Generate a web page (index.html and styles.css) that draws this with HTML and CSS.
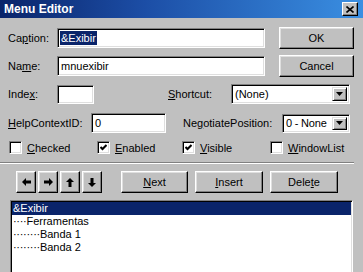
FILE: index.html
```html
<!DOCTYPE html>
<html lang="en">
    <head>
        <meta charset="utf-8" />
        <title>Menu Editor</title>
        <link rel="stylesheet" href="styles.css">
    </head>

    <body>
        <div class="dialog">
            <div class="titlebar">
                <span class="title">Menu Editor</span>
                <span class="close">
                    <svg width="8" height="7" viewBox="0 0 8 7"><path d="M0.5 0.5 L7.5 6.5 M7.5 0.5 L0.5 6.5" stroke="#000" stroke-width="1.6" fill="none"/></svg>
                </span>
            </div>

            <!-- Caption -->
            <div class="row row-tall">
                <span class="lbl lbl-first">Ca<u>p</u>tion:</span>
                <div class="field field-wide"><span class="sel">&amp;Exibir</span></div>
                <div class="btn btn-side">OK</div>
            </div>

            <!-- Name -->
            <div class="row row-tall gap-6">
                <span class="lbl lbl-first">Na<u>m</u>e:</span>
                <div class="field field-wide">mnuexibir</div>
                <div class="btn btn-side">Cancel</div>
            </div>

            <!-- Index / Shortcut -->
            <div class="row gap-7">
                <span class="lbl lbl-first">Inde<u>x</u>:</span>
                <div class="field field-index"></div>
                <span class="lbl lbl-shortcut"><u>S</u>hortcut:</span>
                <div class="field combo combo-shortcut">
                    <span class="combo-text">(None)</span>
                    <span class="drop">
                        <svg width="7" height="4" viewBox="0 0 7 4"><polygon points="0,0 7,0 3.5,4" fill="#000"/></svg>
                    </span>
                </div>
            </div>

            <!-- HelpContextID / NegotiatePosition -->
            <div class="row gap-9">
                <span class="lbl lbl-help"><u>H</u>elpContextID:</span>
                <div class="field field-help">0</div>
                <span class="lbl lbl-negotiate">Ne<u>g</u>otiatePosition:</span>
                <div class="field combo combo-negotiate">
                    <span class="combo-text">0 - None</span>
                    <span class="drop">
                        <svg width="7" height="4" viewBox="0 0 7 4"><polygon points="0,0 7,0 3.5,4" fill="#000"/></svg>
                    </span>
                </div>
            </div>

            <!-- Flags -->
            <div class="row checks">
                <div class="check check-1"><span class="box"></span><span><u>C</u>hecked</span></div>
                <div class="check check-2"><span class="box"><svg width="7" height="7" viewBox="0 0 7 7"><polyline points="0.5,3 2.5,5 6.5,1" stroke="#000" stroke-width="2" fill="none"/></svg></span><span><u>E</u>nabled</span></div>
                <div class="check check-3"><span class="box"><svg width="7" height="7" viewBox="0 0 7 7"><polyline points="0.5,3 2.5,5 6.5,1" stroke="#000" stroke-width="2" fill="none"/></svg></span><span><u>V</u>isible</span></div>
                <div class="check"><span class="box"></span><span><u>W</u>indowList</span></div>
            </div>

            <div class="separator"></div>

            <!-- Arrows and actions -->
            <div class="row row-tall actions">
                <div class="btn arrow">
                    <svg width="9" height="8" viewBox="0 0 9 8"><polygon points="0,4 4,0 4,2.5 9,2.5 9,5.5 4,5.5 4,8" fill="#000"/></svg>
                </div>
                <div class="btn arrow">
                    <svg width="9" height="8" viewBox="0 0 9 8"><polygon points="9,4 5,0 5,2.5 0,2.5 0,5.5 5,5.5 5,8" fill="#000"/></svg>
                </div>
                <div class="btn arrow">
                    <svg width="8" height="9" viewBox="0 0 8 9"><polygon points="4,0 8,4 5.5,4 5.5,9 2.5,9 2.5,4 0,4" fill="#000"/></svg>
                </div>
                <div class="btn arrow">
                    <svg width="8" height="9" viewBox="0 0 8 9"><polygon points="4,9 8,5 5.5,5 5.5,0 2.5,0 2.5,5 0,5" fill="#000"/></svg>
                </div>
                <div class="btn action action-next"><u>N</u>ext</div>
                <div class="btn action"><u>I</u>nsert</div>
                <div class="btn action">Dele<u>t</u>e</div>
            </div>

            <!-- Menu tree -->
            <div class="list">
                <div class="item selected">&amp;Exibir</div>
                <div class="item"><span class="dots">····</span>Ferramentas</div>
                <div class="item"><span class="dots">········</span>Banda 1</div>
                <div class="item"><span class="dots">········</span>Banda 2</div>
            </div>
        </div>
    </body>
</html>
```

FILE: styles.css
```css
body {
    margin: 0;
    overflow: hidden;
    background-color: #c0c0c0;
}
.dialog {
    width: 363px;
    height: 272px;
    overflow: hidden;
    background-color: #c0c0c0;
    font-family: "Liberation Sans", Arial, sans-serif;
    font-size: 11px;
    color: #000;
}
.titlebar {
    height: 18px;
    display: flex;
    align-items: center;
    justify-content: space-between;
    padding: 0 5px 0 4px;
    background: linear-gradient(to right, #0a246a 0%, #1c4ea6 40%, #3a8fe2 100%);
}
.title {
    color: #fff;
    font-weight: bold;
    font-size: 12px;
}
.close {
    width: 14px;
    height: 12px;
    display: flex;
    align-items: center;
    justify-content: center;
    background-color: #c0c0c0;
    border: 1px solid;
    border-color: #fff #000 #000 #fff;
    box-shadow: inset -1px -1px 0 #808080;
}
u {
    text-decoration: underline;
    text-underline-offset: 1px;
}

/* rows */
.row {
    display: flex;
    align-items: center;
    height: 20px;
}
.row-tall {
    height: 22px;
    margin-top: 9px;
}
.gap-6 {
    margin-top: 6px;
}
.gap-7 {
    margin-top: 7px;
}
.gap-9 {
    margin-top: 9px;
}
.lbl {
    flex: none;
    white-space: nowrap;
}
.lbl-first {
    width: 49px;
    padding-left: 8px;
}
.lbl-shortcut {
    width: 63px;
    margin-left: 74px;
}
.lbl-help {
    width: 83px;
    padding-left: 8px;
}
.lbl-negotiate {
    width: 99px;
    margin-left: 17px;
}

/* sunken fields */
.field {
    flex: none;
    box-sizing: border-box;
    height: 20px;
    display: flex;
    align-items: center;
    padding-left: 3px;
    background-color: #fff;
    border: 1px solid;
    border-color: #808080 #fff #fff #808080;
    box-shadow: inset 1px 1px 0 #000, inset -1px -1px 0 #dfdfdf;
    white-space: nowrap;
}
.field-wide {
    width: 208px;
}
.field-index {
    width: 37px;
    height: 19px;
}
.field-help {
    width: 75px;
}
.sel {
    background-color: #0a246a;
    color: #fff;
    line-height: 14px;
    padding: 0 1px;
    margin-left: -1px;
}
.combo {
    justify-content: space-between;
    padding: 2px 2px 2px 3px;
}
.combo-shortcut {
    width: 119px;
}
.combo-negotiate {
    width: 68px;
    height: 19px;
    letter-spacing: -0.2px;
}
.drop {
    box-sizing: border-box;
    width: 15px;
    height: 100%;
    display: flex;
    align-items: center;
    justify-content: center;
    background-color: #c0c0c0;
    border: 1px solid;
    border-color: #dfdfdf #000 #000 #dfdfdf;
    box-shadow: inset 1px 1px 0 #fff, inset -1px -1px 0 #808080;
}

/* raised buttons */
.btn {
    flex: none;
    box-sizing: border-box;
    height: 22px;
    display: flex;
    align-items: center;
    justify-content: center;
    background-color: #c0c0c0;
    border: 1px solid;
    border-color: #fff #000 #000 #fff;
    box-shadow: inset -1px -1px 0 #808080, inset 1px 1px 0 #dfdfdf;
}
.btn-side {
    width: 75px;
    margin-left: 14px;
}
.actions {
    margin-top: 7px;
    padding-left: 16px;
}
.arrow {
    width: 20px;
    margin-right: 2px;
}
.action {
    width: 68px;
    margin-left: 7px;
}
.action-next {
    width: 67px;
    margin-left: 17px;
}

/* checkboxes */
.checks {
    height: 13px;
    margin-top: 8px;
    padding-left: 9px;
}
.check {
    display: flex;
    align-items: center;
    gap: 5px;
    white-space: nowrap;
}
.check-1 {
    width: 88px;
}
.check-2 {
    width: 85px;
}
.check-3 {
    width: 88px;
}
.box {
    box-sizing: border-box;
    width: 13px;
    height: 13px;
    display: flex;
    align-items: center;
    justify-content: center;
    background-color: #fff;
    border: 1px solid;
    border-color: #808080 #fff #fff #808080;
    box-shadow: inset 1px 1px 0 #000, inset -1px -1px 0 #dfdfdf;
}

.separator {
    width: 354px;
    height: 0;
    margin-top: 8px;
    border-top: 1px solid #808080;
    border-bottom: 1px solid #fff;
}

/* menu list */
.list {
    box-sizing: border-box;
    width: 343px;
    height: 90px;
    margin: 7px 0 0 10px;
    padding: 1px 0;
    background-color: #fff;
    border: 1px solid;
    border-color: #808080 #fff #fff #808080;
    box-shadow: inset 1px 1px 0 #000, inset -1px -1px 0 #dfdfdf;
}
.item {
    height: 13px;
    line-height: 13px;
    margin: 0 1px;
    padding-left: 1px;
    white-space: nowrap;
}
.dots {
    letter-spacing: -0.3px;
}
.selected {
    background-color: #0a246a;
    color: #fff;
}
```
